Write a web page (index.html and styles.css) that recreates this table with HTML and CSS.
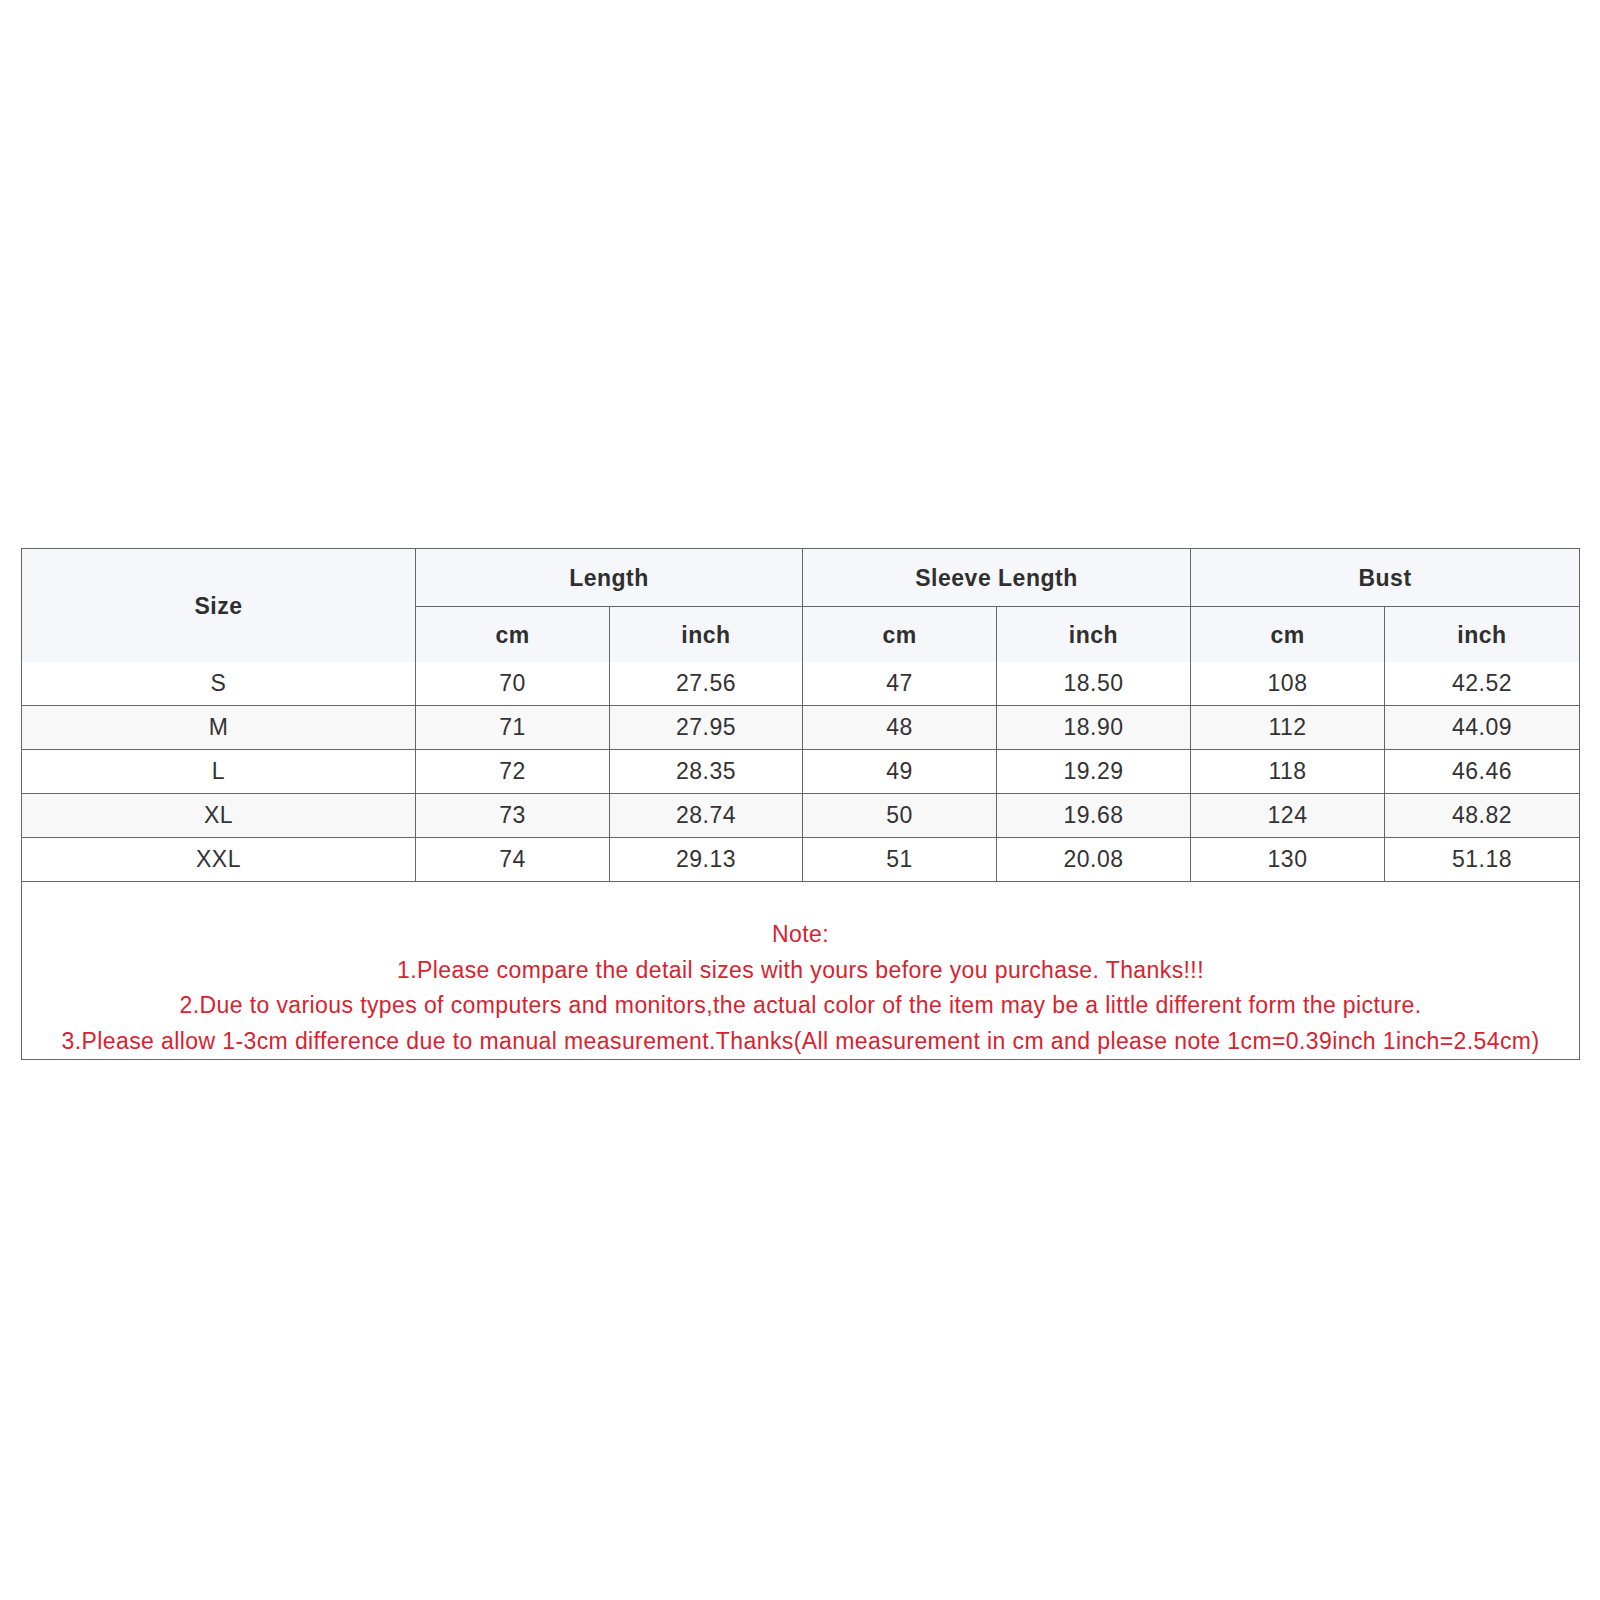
FILE: index.html
```html
<!DOCTYPE html>
<html>
<head>
<meta charset="utf-8">
<link rel="stylesheet" href="styles.css">
</head>
<body>
<div class="page">
<table class="size-table">
  <colgroup>
    <col class="c-size">
    <col class="c-sub"><col class="c-sub2">
    <col class="c-sub"><col class="c-sub">
    <col class="c-sub"><col class="c-sub3">
  </colgroup>
  <thead>
    <tr class="h1">
      <th rowspan="2" class="size-h">Size</th>
      <th colspan="2">Length</th>
      <th colspan="2">Sleeve Length</th>
      <th colspan="2">Bust</th>
    </tr>
    <tr class="h2">
      <th>cm</th><th>inch</th>
      <th>cm</th><th>inch</th>
      <th>cm</th><th>inch</th>
    </tr>
  </thead>
  <tbody>
    <tr class="r first"><td>S</td><td>70</td><td>27.56</td><td>47</td><td>18.50</td><td>108</td><td>42.52</td></tr>
    <tr class="r alt"><td>M</td><td>71</td><td>27.95</td><td>48</td><td>18.90</td><td>112</td><td>44.09</td></tr>
    <tr class="r"><td>L</td><td>72</td><td>28.35</td><td>49</td><td>19.29</td><td>118</td><td>46.46</td></tr>
    <tr class="r alt"><td>XL</td><td>73</td><td>28.74</td><td>50</td><td>19.68</td><td>124</td><td>48.82</td></tr>
    <tr class="r"><td>XXL</td><td>74</td><td>29.13</td><td>51</td><td>20.08</td><td>130</td><td>51.18</td></tr>
    <tr class="note-row">
      <td colspan="7" class="note">
        <div>Note:</div>
        <div>1.Please compare the detail sizes with yours before you purchase. Thanks!!!</div>
        <div>2.Due to various types of computers and monitors,the actual color of the item may be a little different form the picture.</div>
        <div>3.Please allow 1-3cm difference due to manual measurement.Thanks(All measurement in cm and please note 1cm=0.39inch 1inch=2.54cm)</div>
      </td>
    </tr>
  </tbody>
</table>
</div>
</body>
</html>
```
FILE: styles.css
```css
html, body {
  margin: 0;
  padding: 0;
  background: #ffffff;
}
.page {
  padding: 548px 0 0 21px;
}
.size-table {
  border-collapse: collapse;
  table-layout: fixed;
  width: 1559px;
  font-family: "Liberation Sans", Arial, sans-serif;
  font-size: 23px;
  letter-spacing: 0.5px;
  color: #333333;
  border: 1px solid #666666;
}
.c-size { width: 394px; }
.c-sub { width: 194px; }
.c-sub2 { width: 193px; }
.c-sub3 { width: 195px; }
.size-table th,
.size-table td {
  padding: 0;
  text-align: center;
  vertical-align: middle;
  border-left: 1px solid #666666;
  border-right: 1px solid #666666;
}
.size-table thead th {
  background: #f5f7fa;
  font-weight: bold;
  color: #2f2f2f;
  padding-top: 2px;
}
.h1 th { height: 55px; }
.h1 th:not(.size-h) { border-bottom: 1px solid #666666; }
.h2 th { height: 53px; }
.r td {
  height: 43px;
  border-bottom: 1px solid #666666;
}
.r:last-of-type td { height: 42px; }
.r.alt td { background: #f8f8f8; }
.note {
  color: #d8232f;
  line-height: 35.6px;
  padding-top: 35px !important;
  font-size: 23px;
  letter-spacing: 0.4px;
}
```
